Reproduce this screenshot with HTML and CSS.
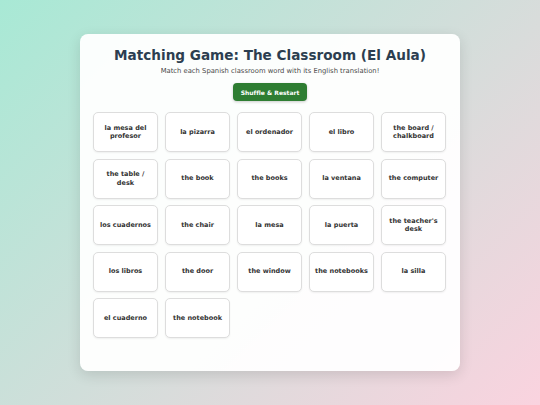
FILE: index.html
```html
<!DOCTYPE html>
<html lang="es">
<head>
  <meta charset="UTF-8" />
  <meta name="viewport" content="width=device-width, initial-scale=1.0"/>
  <title>Matching Game: The Classroom</title>
  <link rel="stylesheet" href="styles.css">
</head>
<body>

  <div class="game">
    <h1>Matching Game: The Classroom (El Aula)</h1>
    <p class="subtitle">Match each Spanish classroom word with its English translation!</p>
    <button class="restart-btn">Shuffle &amp; Restart</button>

    <div class="board" id="board">
      <div class="tile">la mesa del profesor</div>
      <div class="tile">la pizarra</div>
      <div class="tile">el ordenador</div>
      <div class="tile">el libro</div>
      <div class="tile">the board / chalkboard</div>
      <div class="tile">the table / desk</div>
      <div class="tile">the book</div>
      <div class="tile">the books</div>
      <div class="tile">la ventana</div>
      <div class="tile">the computer</div>
      <div class="tile">los cuadernos</div>
      <div class="tile">the chair</div>
      <div class="tile">la mesa</div>
      <div class="tile">la puerta</div>
      <div class="tile">the teacher's desk</div>
      <div class="tile">los libros</div>
      <div class="tile">the door</div>
      <div class="tile">the window</div>
      <div class="tile">the notebooks</div>
      <div class="tile">la silla</div>
      <div class="tile">el cuaderno</div>
      <div class="tile">the notebook</div>
    </div>
  </div>

</body>
</html>
```

FILE: styles.css
```css
* {
  box-sizing: border-box;
}

body {
  font-family: 'DejaVu Sans', Verdana, sans-serif;
  background: linear-gradient(135deg, #a8e9d5 0%, #fad3df 100%);
  margin: 0;
  min-height: 100vh;
  display: flex;
  justify-content: center;
  align-items: flex-start;
  padding-top: 34px;
  color: #333;
}

.game {
  width: 380px;
  background-color: rgba(255, 255, 255, 0.95);
  border-radius: 8px;
  box-shadow: 0 4px 14px rgba(0, 0, 0, 0.12);
  padding: 13px 13px 33px 13px;
  text-align: center;
}

h1 {
  font-size: 13.6px;
  line-height: 17px;
  color: #2c3e50;
  margin: 0 0 3px 0;
  white-space: nowrap;
}

.subtitle {
  font-size: 6.8px;
  line-height: 8px;
  color: #4a4a4a;
  margin: 0 0 8px 0;
}

.restart-btn {
  font-family: inherit;
  font-size: 6px;
  font-weight: bold;
  background-color: #2e7d32;
  color: #fff;
  border: none;
  border-radius: 4px;
  width: 74px;
  height: 18px;
  padding: 0;
  box-shadow: 0 1px 3px rgba(0, 0, 0, 0.2);
  cursor: pointer;
  margin-bottom: 11px;
  vertical-align: top;
}

.board {
  display: grid;
  grid-template-columns: repeat(5, 65px);
  grid-auto-rows: 40px;
  gap: 6.5px 7px;
}

.tile {
  display: flex;
  align-items: center;
  justify-content: center;
  padding: 0 3px;
  background-color: #fff;
  border: 1px solid #ddd;
  border-radius: 5px;
  box-shadow: 0 1px 2px rgba(0, 0, 0, 0.06);
  font-size: 6.5px;
  font-weight: bold;
  line-height: 1.25;
  color: #333;
  cursor: pointer;
}
```
